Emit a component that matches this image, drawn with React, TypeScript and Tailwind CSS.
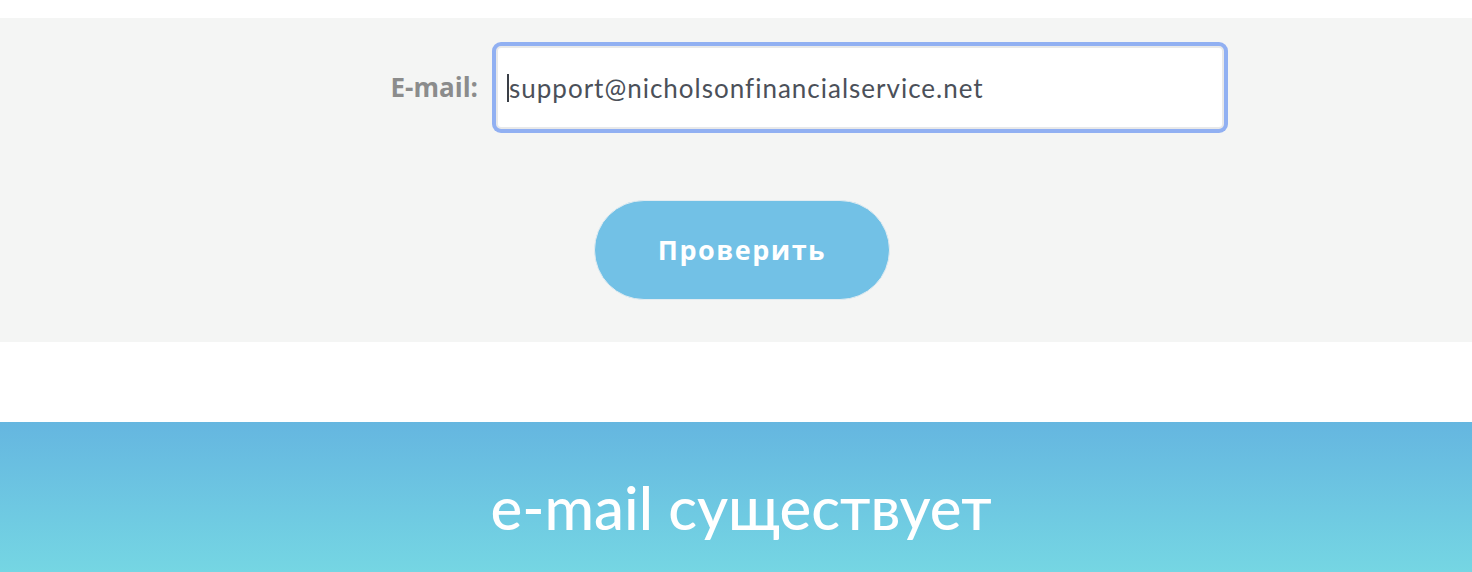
export default function App() {
  return (
    <div className="min-h-screen bg-white">
      <div className="h-[18px]" />
      <section className="bg-[#f4f5f4] pt-[28px] pb-[42px]">
        <div className="grid grid-cols-[482px_728px] gap-x-[14px] items-center">
          <label className="pr-[4px] text-right font-['Open_Sans',sans-serif] text-[26px] font-bold text-[#8b8c8c]">
            E-mail:
          </label>
          <div className="relative">
            <input
              readOnly
              value="support@nicholsonfinancialservice.net"
              className="h-[83px] w-[728px] rounded-[5px] border-2 border-[#e8e9ea] bg-white pl-[11px] font-['Lato',sans-serif] text-[26px] tracking-[1px] text-[#4b5059] outline-none ring-4 ring-[#91b0f2]"
            />
            <span className="absolute left-[11px] top-[28px] h-[28px] w-[1.5px] bg-[#3a3f47]" />
          </div>
        </div>
        <div className="mt-[71px] flex justify-center pl-[12px]">
          <button className="h-[100px] w-[296px] rounded-full border border-[#e2ecf1] bg-[#72c1e6] font-['Open_Sans',sans-serif] text-[27px] font-bold tracking-[1.5px] text-white">
            Проверить
          </button>
        </div>
      </section>
      <div className="h-[80px]" />
      <section className="h-[150px] bg-gradient-to-b from-[#65b6e0] to-[#75d6e3] pt-[49px] pl-[10px] text-center">
        <h2 className="font-['Lato',sans-serif] text-[60px] font-medium leading-[1.2] text-white">
          e-mail существует
        </h2>
      </section>
    </div>
  )
}
